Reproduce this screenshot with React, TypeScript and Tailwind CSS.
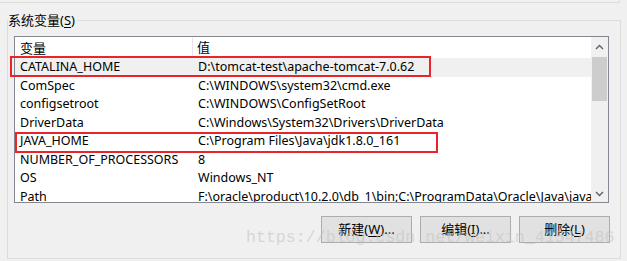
import type { ReactNode } from 'react';

type EnvVar = {
  name: string;
  value: string;
  selected?: boolean;
};

const VARS: EnvVar[] = [
  { name: 'CATALINA_HOME', value: 'D:\\tomcat-test\\apache-tomcat-7.0.62', selected: true },
  { name: 'ComSpec', value: 'C:\\WINDOWS\\system32\\cmd.exe' },
  { name: 'configsetroot', value: 'C:\\WINDOWS\\ConfigSetRoot' },
  { name: 'DriverData', value: 'C:\\Windows\\System32\\Drivers\\DriverData' },
  { name: 'JAVA_HOME', value: 'C:\\Program Files\\Java\\jdk1.8.0_161' },
  { name: 'NUMBER_OF_PROCESSORS', value: '8' },
  { name: 'OS', value: 'Windows_NT' },
  {
    name: 'Path',
    value: 'F:\\oracle\\product\\10.2.0\\db_1\\bin;C:\\ProgramData\\Oracle\\Java\\javapath;C:\\WINDOWS\\system32',
  },
];

const UI_FONT = "font-['Noto_Sans','Noto_Sans_CJK_SC',sans-serif]";

function Chevron({ up }: { up?: boolean }) {
  return (
    <svg width="9" height="6" viewBox="0 0 9 6" className="block">
      <polyline
        points={up ? '1,5 4.5,1.5 8,5' : '1,1 4.5,4.5 8,1'}
        fill="none"
        stroke="#606060"
        strokeWidth="1.4"
      />
    </svg>
  );
}

function Mnemonic({ label, keyChar, suffix }: { label: string; keyChar: string; suffix?: ReactNode }) {
  return (
    <>
      {label}(<span className="underline underline-offset-2">{keyChar}</span>){suffix}
    </>
  );
}

function DialogButton({ children }: { children: ReactNode }) {
  return (
    <button
      type="button"
      className="flex h-[27px] w-[91px] items-center justify-center border border-[#adadad] bg-[#e1e1e1] text-[13px] text-black"
    >
      {children}
    </button>
  );
}

export default function App() {
  return (
    <div className={`relative h-[261px] w-[627px] overflow-hidden bg-[#f0f0f0] text-black ${UI_FONT}`}>
      <div className="h-[3px] w-[620px] border-b border-r border-[#dcdcdc]" />

      <fieldset className="mt-[9px] ml-[7px] h-[247px] w-[614px] border border-[#dcdcdc]">
        <legend className="pr-[2px] text-[13px] leading-[17px]">
          <Mnemonic label="系统变量" keyChar="S" />
        </legend>

        <div className="mt-[7px] ml-[6px] flex h-[167px] w-[595px] border border-[#828790] bg-white">
          <div className="flex-1 overflow-hidden">
            <div className="flex h-[21px] items-center pt-[1px] text-[13px]">
              <div className="w-[178px] border-r border-[#e5e5e5] pl-[5px] leading-[20px]">变量</div>
              <div className="pl-[4px]">值</div>
            </div>
            {VARS.map((v) => (
              <div
                key={v.name}
                className={[
                  'flex h-[18.6px] items-center whitespace-nowrap text-[12.5px]',
                  v.selected ? 'bg-[#f0f0f0]' : '',
                ].join(' ')}
              >
                <div className="w-[179px] shrink-0 pl-[5px]">{v.name}</div>
                <div className="pl-[4px]">{v.value}</div>
              </div>
            ))}
          </div>

          <div className="flex w-[17px] shrink-0 flex-col bg-[#f0f0f0]">
            <div className="flex h-[19px] items-center justify-center">
              <Chevron up />
            </div>
            <div className="flex flex-1 flex-col px-[1px] pt-[1px]">
              <div className="h-[44px] bg-[#cdcdcd]" />
            </div>
            <div className="flex h-[17px] items-center justify-center">
              <Chevron />
            </div>
          </div>
        </div>

        <div className="mt-[13px] flex w-[602px] justify-end gap-[8px]">
          <DialogButton>
            <Mnemonic label="新建" keyChar="W" suffix="..." />
          </DialogButton>
          <DialogButton>
            <Mnemonic label="编辑" keyChar="I" suffix="..." />
          </DialogButton>
          <DialogButton>
            <Mnemonic label="删除" keyChar="L" />
          </DialogButton>
        </div>
      </fieldset>

      {/* highlight boxes drawn over the list */}
      <div className="absolute top-[56px] left-[10px] h-[21px] w-[421px] border-2 border-[#e8252b]" />
      <div className="absolute top-[132px] left-[15px] h-[21px] w-[423px] border-2 border-[#e8252b]" />

      {/* watermark */}
      <div className="pointer-events-none absolute top-[228px] left-[246px] font-['Liberation_Mono',monospace] text-[16.6px] leading-[20px] text-[#c4c4c4]/60">
        https://blog.csdn.net/weixin_41547486
      </div>
    </div>
  );
}
